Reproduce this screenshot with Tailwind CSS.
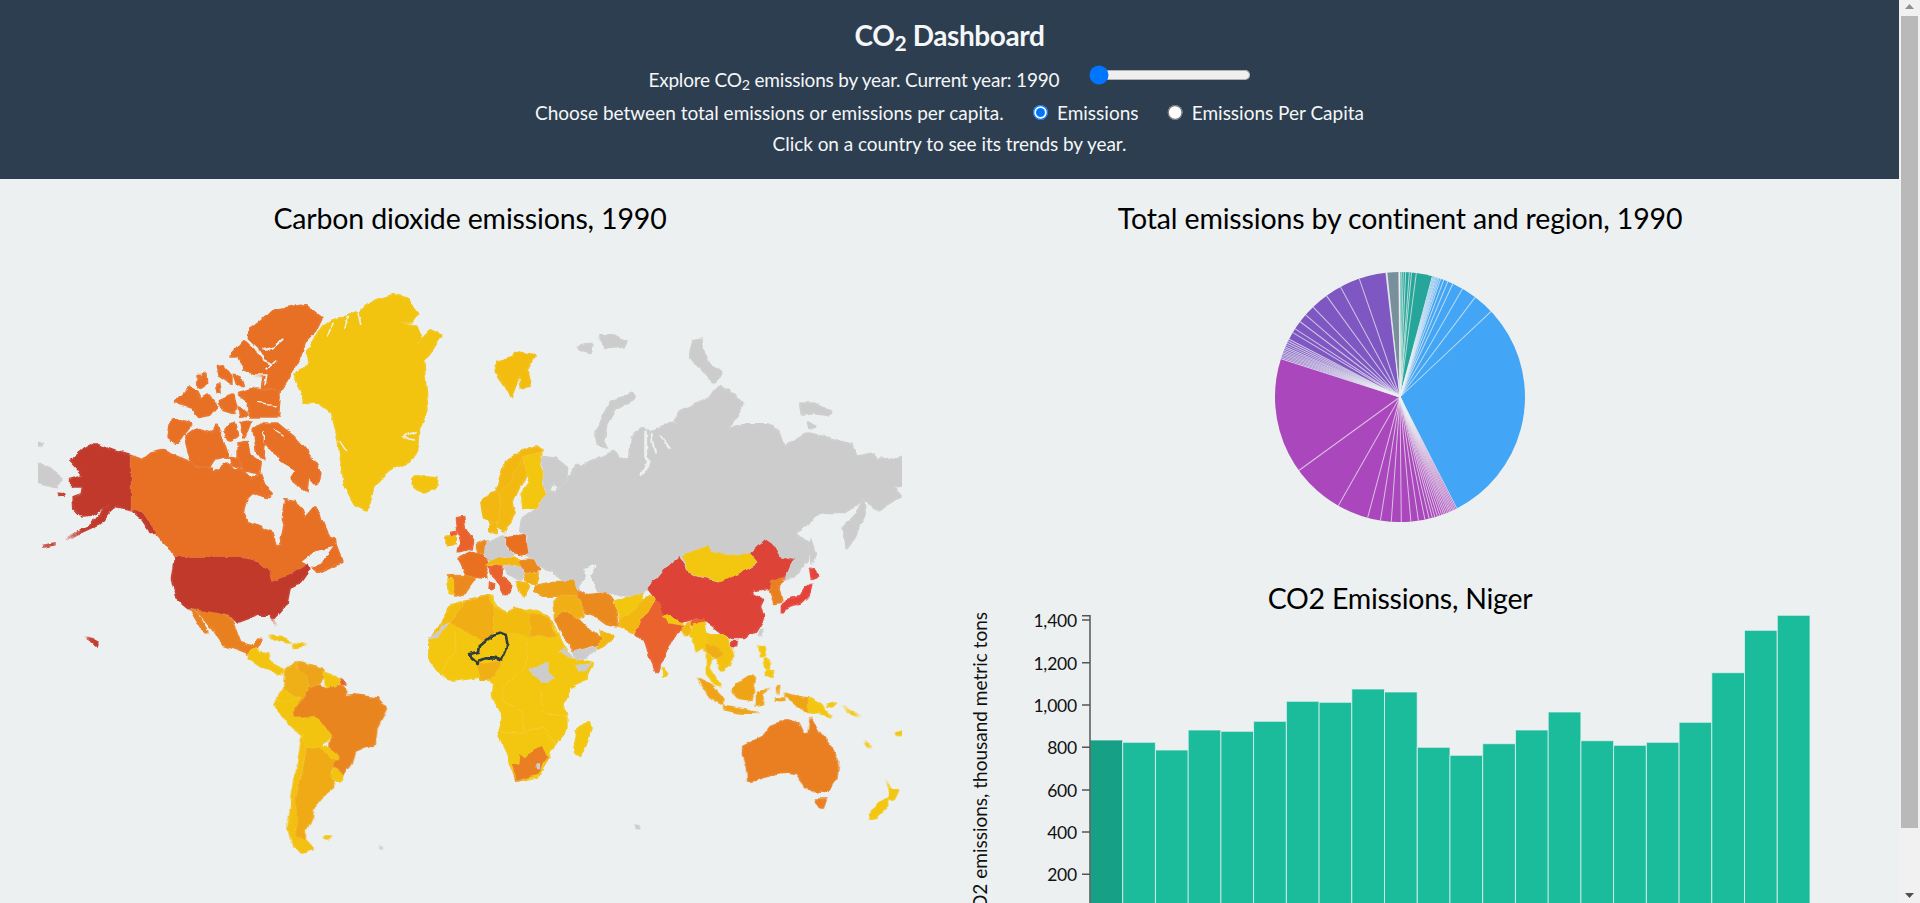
<!doctype html>
<html lang="en">
<head>
<meta charset="utf-8">
<title>CO2 Dashboard</title>
<script src="https://cdn.jsdelivr.net/npm/@tailwindcss/browser@4"></script>
</head>
<body class="m-0 h-[903px] overflow-hidden bg-[#ecf0f1] [font-family:Lato,'Noto_Sans',sans-serif] text-black">
<div class="flex h-[903px] w-[1920px]">
<main class="w-[1899px] h-[903px] overflow-hidden">
  <header class="h-[179px] bg-[#2c3e50] text-[#f4f6f7] flex flex-col items-center pt-[17px]">
    <h1 class="h-[36px] text-[28px] leading-[36px] font-bold tracking-[-0.4px]">CO<sub>2</sub> Dashboard</h1>
    <div class="mt-[9px] h-[36px] flex items-center text-[19px] tracking-[-0.2px]">
      <span>Explore CO<sub>2</sub> emissions by year. Current year: 1990</span>
      <input type="range" min="1990" max="2011" value="1990" class="ml-[24px] w-[129px] [zoom:1.25] -mt-[8px]">
    </div>
    <div class="-mt-[1px] h-[32px] flex items-center text-[19px]">
      <span>Choose between total emissions or emissions per capita.</span>
      <label class="ml-[29px] flex items-center gap-[8px]"><input type="radio" name="m" checked class="[zoom:1.25] m-0"><span>Emissions</span></label>
      <label class="ml-[29px] flex items-center gap-[8px]"><input type="radio" name="m" class="[zoom:1.25] m-0"><span>Emissions Per Capita</span></label>
    </div>
    <p class="h-[30px] leading-[30px] text-[19px] tracking-[-0.05px]">Click on a country to see its trends by year.</p>
  </header>
  <div class="flex h-[724px]">
    <section class="w-[940px] shrink-0">
      <h2 class="h-[61px] pt-[21px] text-center text-[28.5px] leading-[36px] tracking-[-0.15px]">Carbon dioxide emissions, 1990</h2>
      <svg class="block" width="940" height="663" viewBox="0 240 940 663">
        <defs>
          <clipPath id="mapclip"><rect x="38" y="240" width="864" height="663"/></clipPath>
          <filter id="rough" filterUnits="userSpaceOnUse" x="0" y="240" width="940" height="663" color-interpolation-filters="sRGB">
            <feMorphology in="SourceGraphic" operator="dilate" radius="1" result="fat"/>
            <feMerge result="c"><feMergeNode in="fat"/><feMergeNode in="SourceGraphic"/></feMerge>
            <feTurbulence type="fractalNoise" baseFrequency=".09" numOctaves="3" seed="4" result="n"/>
            <feDisplacementMap in="c" in2="n" scale="5" xChannelSelector="R" yChannelSelector="G" result="d"/>
            <feGaussianBlur in="d" stdDeviation=".4"/>
          </filter>
        </defs>
        <g clip-path="url(#mapclip)">
        <g filter="url(#rough)" stroke="#ffffff" stroke-opacity=".16" stroke-width="1.2">
        <!-- North America / Greenland -->
        <g transform="translate(0 260) scale(.33333)">
          <polygon fill="#cccccc" points="100,600 150,630 185,655 165,682 100,665"/>
          <polygon fill="#cccccc" points="100,545 130,550 120,557 100,557"/>
          <polygon fill="#c0392b" points="393,588 340,573 285,552 250,572 212,603 232,625 250,648 205,660 225,680 248,680 245,705 220,715 222,745 245,770 275,768 300,750 325,735 285,785 195,842 235,820 300,790 325,755 345,738 393,748 430,760 470,820 455,820 425,775 393,748"/>
          <polygon fill="#c0392b" points="128,858 165,850 165,853 130,860"/>
          <polygon fill="#c0392b" points="172,697 192,702 190,706 174,701"/>
          <polygon fill="#c0392b" points="258,1132 272,1136 294,1148 290,1155 280,1145"/>
          <polygon fill="#e87024" points="393,588 430,600 455,580 490,572 530,590 575,608 590,625 635,625 640,640 680,610 700,630 725,630 755,660 780,640 790,665 785,695 815,705 800,715 760,695 740,715 728,760 745,785 780,800 815,820 828,860 845,855 855,800 848,775 855,720 880,725 905,750 915,775 945,740 960,770 985,830 1005,835 1008,860 1025,905 985,925 950,940 925,910 870,945 815,965 805,930 770,900 725,890 525,890 505,860 470,820 430,760 393,748"/>
          <polygon fill="#ecf0f1" stroke="none" points="905,905 950,870 1000,858 962,912 935,920"/>
          <polygon fill="#e87024" points="760,510 790,490 830,490 880,530 915,570 965,640 945,672 925,650 920,695 880,660 850,640 840,590 820,575 795,545 790,600 770,570"/>
          <polygon fill="#e87024" points="555,530 590,505 640,520 650,495 670,545 685,590 640,600 625,625 580,615 565,575"/>
          <polygon fill="#e87024" points="515,475 575,490 550,520 530,550 505,530"/>
          <polygon fill="#e87024" points="672,510 700,488 712,525 690,540"/>
          <polygon fill="#e87024" points="720,488 755,483 745,510 730,535 725,505"/>
          <polygon fill="#e87024" points="715,550 740,545 750,590 780,610 775,640 730,630 715,590"/>
          <polygon fill="#e87024" points="690,590 720,595 720,625 695,615"/>
          <polygon fill="#e87024" points="715,402 750,392 770,385 840,395 835,470 750,470 745,425"/>
          <polygon fill="#e87024" points="690,290 745,230 755,205 790,180 820,150 850,145 880,140 915,135 965,175 945,215 915,245 900,290 880,330 855,370 840,392 785,385 790,350 760,345 735,330 715,290"/>
          <polygon fill="#e87024" points="650,320 670,318 695,350 695,372 655,345"/>
          <polygon fill="#e87024" points="700,340 720,350 730,380 710,370"/>
          <polygon fill="#e87024" points="527,425 570,380 590,400 600,420 625,405 650,440 630,465 595,472 570,440 540,432"/>
          <polygon fill="#e87024" points="655,425 700,405 710,440 700,460 670,450"/>
          <polygon fill="#e87024" points="590,365 620,340 622,370 600,385"/>
          <polygon fill="#e87024" points="645,375 655,372 660,395 650,395"/>
          <polygon fill="#e87024" points="715,438 745,465 720,468"/>
          <polygon fill="#e87024" points="590,350 602,345 600,355"/>
          <g fill="none" stroke="#ecf0f1" stroke-opacity="1" stroke-linecap="round">
            <polyline stroke-width="7" points="735,232 770,265 790,300 815,312"/>
            <polyline stroke-width="6" points="790,270 820,262 848,238"/>
            <polyline stroke-width="5" points="800,328 830,300"/>
            <polyline stroke-width="5" points="765,345 800,345 795,375"/>
            <polyline stroke-width="4" points="770,430 830,438"/>
            <polyline stroke-width="4" points="790,515 790,545"/>
            <polyline stroke-width="4" points="825,510 850,525"/>
            <polyline stroke-width="5" points="1075,150 1085,190"/>
            <polyline stroke-width="5" points="1045,170 1035,205"/>
            <polyline stroke-width="4" points="1000,190 980,225"/>
            <polyline stroke-width="5" points="1245,515 1210,530 1240,540"/>
            <polyline stroke-width="4" points="1020,545 1040,575"/>
          </g>
          <polygon fill="#ecf0f1" stroke="none" points="825,590 850,610 885,630 860,670 830,650"/>
          <polygon fill="#e87024" points="782,665 820,700 800,710 785,695"/>
          <polygon fill="#f2c40f" points="1180,105 1220,115 1255,160 1235,185 1195,185 1250,200 1265,240 1250,255 1295,210 1325,225 1295,270 1270,300 1275,360 1283,450 1255,510 1252,570 1230,605 1175,625 1135,660 1115,690 1100,752 1065,735 1035,680 1020,580 1015,540 995,455 960,430 915,425 885,350 930,310 920,280 965,205 1000,180 1075,155 1130,120"/>
          <g fill="none" stroke="#ecf0f1" stroke-opacity="1" stroke-linecap="round">
            <polyline stroke-width="5" points="1075,150 1085,190"/>
            <polyline stroke-width="5" points="1045,170 1035,205"/>
            <polyline stroke-width="4" points="1000,190 980,225"/>
            <polyline stroke-width="5" points="1245,515 1210,530 1240,540"/>
            <polyline stroke-width="4" points="1020,545 1040,575"/>
          </g>
          <polygon fill="#f2c40f" points="1235,660 1250,648 1310,655 1305,685 1270,698 1245,680"/>
          <polygon fill="#e8801f" points="570,1045 590,1060 625,1120 605,1105"/>
          <polygon fill="#e8801f" points="590,1048 630,1052 655,1058 685,1072 700,1085 710,1110 725,1150 760,1160 775,1135 785,1137 775,1160 750,1170 745,1182 715,1170 670,1155 640,1110 615,1080"/>
          <polygon fill="#c0392b" points="525,890 725,890 770,900 805,930 815,965 870,945 925,910 925,930 900,965 870,980 860,1030 820,1075 830,1105 815,1065 770,1065 715,1085 700,1070 655,1060 630,1055 565,1045 535,1020 515,960"/>
        </g>
        <!-- Central and South America -->
        <g transform="translate(180 620) scale(.33333)">
          <polygon fill="#f2c40f" points="205,100 230,80 235,100 265,100 270,130 310,150 300,165 275,150 250,140 210,115"/>
          <polygon fill="#f2c40f" points="265,45 300,50 335,70 300,62"/>
          <polygon fill="#f2c40f" points="340,70 380,75 345,82"/>
          <polygon fill="#efb016" points="350,128 315,150 312,205 345,232 368,232 385,200 380,170 352,150"/>
          <polygon fill="#eea41a" points="352,128 395,140 430,150 430,170 410,195 390,205 380,170 355,150"/>
          <polygon fill="#f2c40f" points="430,155 475,180 480,195 440,205"/>
          <polygon fill="#e8622a" points="478,175 498,190 485,195"/>
          <polygon fill="#f2c40f" points="312,205 345,232 320,250 290,238"/>
          <polygon fill="#f2c40f" points="290,240 320,250 345,232 365,235 340,270 345,290 375,290 370,345 340,325 310,290 285,255"/>
          <polygon fill="#e9851f" points="368,232 385,207 410,195 440,205 480,195 500,210 495,228 520,225 590,235 618,265 600,300 590,320 585,370 525,395 515,430 490,462 460,440 480,405 450,385 455,345 430,315 400,290 375,290 345,290 340,268"/>
          <polygon fill="#f2c40f" points="375,290 400,290 430,315 455,345 420,380 380,385 368,345"/>
          <polygon fill="#f2c40f" points="420,380 450,385 480,405 475,420 450,420"/>
          <polygon fill="#f2c40f" points="460,442 490,462 480,482 450,475"/>
          <polygon fill="#f3bf10" points="368,345 380,385 355,500 345,545 355,600 345,650 375,660 400,688 365,695 340,680 325,625 335,545"/>
          <polygon fill="#efaa16" points="380,385 420,378 450,420 475,420 450,445 460,500 430,525 415,545 400,565 395,600 375,630 375,660 345,650 355,600 345,545 370,450"/>
          <polygon fill="#f2c40f" points="432,650 452,648 445,657"/>
          <polygon fill="#cccccc" points="598,678 610,688 604,690"/>
        </g>
        <!-- Russia, China, north Asia -->
        <g transform="translate(480 260) scale(.33333)">
          <polygon fill="#cccccc" points="185,590 225,595 262,625 260,655 240,690 222,665 205,690 230,695 270,650 290,610 300,625 330,605 400,575 420,600 450,590 455,530 490,505 510,520 550,495 590,490 595,460 660,425 690,415 715,380 755,395 785,430 775,465 735,510 760,500 790,495 860,495 895,510 915,560 985,520 1050,535 1115,555 1130,590 1180,580 1190,600 1290,590 1290,675 1240,680 1260,710 1190,750 1150,715 1090,760 1020,760 945,820 985,850 985,900 940,950 915,955 875,965 700,1050 505,985 470,1015 410,1000 355,1000 345,965 315,950 290,990 255,965 220,935 180,920 170,900 140,885 142,830 120,810 125,780 175,745 195,700"/>
          <g fill="none" stroke="#ecf0f1" stroke-opacity="1" stroke-linecap="round">
            <polyline stroke-width="9" points="497,520 497,590 510,605 485,640"/>
            <polyline stroke-width="6" points="512,525 525,575"/>
            <polyline stroke-width="5" points="540,525 570,565"/>
          </g>
          <polygon fill="#ecf0f1" stroke="none" points="310,925 350,910 330,945 355,1000 330,985"/>
          <polygon fill="#cccccc" points="345,530 370,470 395,425 460,400 465,415 405,445 380,490 370,545 380,565 350,550"/>
          <polygon fill="#cccccc" points="295,262 335,250 330,280"/>
          <polygon fill="#cccccc" points="360,225 395,225 420,240 440,240 430,260 380,265"/>
          <polygon fill="#cccccc" points="630,285 640,240 665,235 670,280 690,315 725,340 700,365 660,325"/>
          <polygon fill="#cccccc" points="960,430 1000,430 1055,455 1040,465 1000,460 965,465"/>
          <polygon fill="#cccccc" points="980,485 1005,500 985,505"/>
          <polygon fill="#cccccc" points="1150,715 1155,760 1125,830 1100,865 1090,800 1130,760"/>
          <polygon fill="#cccccc" points="990,835 1005,880 995,915 990,880"/>
          <polygon fill="#dd4337" points="505,985 550,930 598,890 625,935 655,950 720,965 790,935 835,910 810,880 855,838 880,855 900,890 938,900 915,955 875,965 865,985 825,990 815,1000 850,1020 840,1040 850,1075 825,1115 790,1135 760,1135 725,1120 680,1085 650,1075 600,1085 545,1065 535,1030 520,1005"/>
          <polygon fill="#f3c60f" points="605,885 680,858 695,875 740,885 810,880 835,908 790,935 725,965 660,950 625,935"/>
          <polygon fill="#e9801f" points="870,965 915,950 895,985 905,1025 885,1030 870,990"/>
          <polygon fill="#e5433a" points="990,925 1018,945 995,955"/>
          <polygon fill="#e5433a" points="995,970 985,1010 965,1030 925,1040 905,1060 905,1040 920,1020 960,1010 975,985"/>
          <polygon fill="#f2b811" points="6,725 50,690 75,605 130,570 175,558 190,570 130,590 95,660 60,700 58,780 45,790 15,775"/>
          <polygon fill="#f2ba10" points="60,700 95,660 130,590 140,640 120,675 95,730 105,760 75,815 50,800 58,780"/>
          <polygon fill="#f3c60f" points="130,590 185,575 180,620 195,705 170,745 130,745 125,700 150,665 140,640"/>
          <polygon fill="#f2b811" points="30,790 45,785 48,820 30,815"/>
          <polygon fill="#f3bd10" points="48,305 100,290 105,275 165,285 140,330 150,380 125,385 120,345 95,410 75,375 50,340"/>
        </g>
        <!-- Africa -->
        <g transform="translate(400 600) scale(.33333)">
          <polygon fill="#f3c60f" points="95,115 135,50 155,15 195,5 265,-12 280,-10 285,20 320,40 350,42 390,30 445,50 490,140 515,175 580,190 555,240 510,265 490,315 500,350 500,385 465,430 440,480 410,530 350,542 330,490 315,445 295,395 310,345 275,285 280,250 240,230 160,242 120,220 90,180 90,115"/>
          <polyline fill="none" stroke-opacity=".3" stroke-width="1.5" points="165,95 165,160 140,180 130,220"/>
          <polyline fill="none" stroke-opacity=".3" stroke-width="1.5" points="380,125 380,200 310,260 310,300 365,335 370,395"/>
          <polyline fill="none" stroke-opacity=".3" stroke-width="1.5" points="420,270 430,340 500,350"/>
          <polyline fill="none" stroke-opacity=".3" stroke-width="1.5" points="300,395 370,400 430,380 465,430"/>
          <polyline fill="none" stroke-opacity=".3" stroke-width="1.5" points="470,110 380,110"/>
          <polygon fill="#f2bd10" points="95,115 135,50 155,15 195,5 150,72 125,75 105,120"/>
          <polygon fill="#cccccc" points="90,118 120,90 125,72 150,72 130,85 115,118"/>
          <polygon fill="#f0ae14" points="195,5 265,-12 280,20 280,98 250,125 205,100 150,72"/>
          <polygon fill="#f2bb10" points="280,20 320,40 350,25 390,40 390,120 355,100 320,100 280,98"/>
          <polygon fill="#f0ae14" points="390,40 445,50 470,110 390,110"/>
          <polygon fill="#f0b015" points="245,240 230,200 235,190 305,178 300,200 270,240"/>
          <polygon fill="#f2c50f" stroke="#2c3e3e" stroke-opacity="1" stroke-width="8" stroke-linejoin="round" points="210,165 237,158 240,135 275,105 300,98 318,105 322,130 318,150 305,178 280,172 255,172 235,180 233,192 215,178"/>
          <polygon fill="#e97f22" points="335,492 355,490 358,462 375,475 400,450 430,440 445,470 430,490 410,525 350,542"/>
          <polygon fill="#cccccc" points="405,490 420,490 420,505 408,505"/>
          <polygon fill="#f3c60f" points="567,365 572,385 555,440 540,465 525,460 522,430 530,395"/>
          <polygon fill="#cccccc" points="385,205 410,205 430,195 440,185 445,215 465,235 440,248 420,245 400,225"/>
          <polygon fill="#cccccc" points="475,160 490,145 520,178 495,165"/>
          <polygon fill="#cccccc" points="525,195 575,190 560,215 540,212"/>
          <polygon fill="#cccccc" points="520,155 590,138 585,155 525,182"/>
          <polygon fill="#f2b811" points="610,118 600,90 640,110 610,140 590,150 590,135"/>
          <polygon fill="#ea8a1e" points="465,55 490,35 520,45 555,80 590,105 610,118 590,135 520,155 510,130 480,90"/>
          <polygon fill="#cccccc" points="704,678 716,684 708,689"/>
        </g>
        <!-- Europe, Middle East, South Asia -->
        <g transform="translate(430 470) scale(.33333)">
          <polygon fill="#cccccc" points="165,220 220,195 225,225 250,255 215,265 180,280 165,260"/>
          <polygon fill="#e9701f" points="225,200 285,195 292,250 265,255 225,225"/>
          <polygon fill="#cccccc" points="222,285 265,290 288,315 270,330 235,310"/>
          <polygon fill="#e9622d" points="80,145 100,140 105,175 130,215 125,235 85,245 95,215 85,190"/>
          <polygon fill="#f2b811" points="48,200 75,195 75,220 50,230"/>
          <polygon fill="#e9622d" points="60,188 78,185 78,196 60,196"/>
          <polygon fill="#ea8a1e" points="140,225 170,210 165,250 145,245"/>
          <polygon fill="#e8701f" points="88,265 125,245 160,255 175,275 165,300 170,325 135,320 110,315"/>
          <polygon fill="#ea8a1e" points="55,318 110,317 135,325 100,375 75,380 70,330"/>
          <polygon fill="#f2c40f" points="55,325 72,330 72,375 55,372"/>
          <polygon fill="#f2b811" points="165,285 210,262 270,268 275,290 225,285"/>
          <polygon fill="#e9622d" points="175,290 215,285 215,320 245,350 225,375 200,325 185,310"/>
          <polygon fill="#e9622d" points="180,335 190,340 188,360 178,355"/>
          <polygon fill="#ea8a1e" points="270,270 315,268 328,300 285,312 272,290"/>
          <polygon fill="#f0ae14" points="285,312 325,310 315,340 290,335"/>
          <polygon fill="#f2b811" points="262,335 285,340 295,350 280,378 270,365 262,345"/>
          <polygon fill="#ee9f1a" points="315,345 360,335 430,335 445,372 400,378 340,378 315,365"/>
          <polygon fill="#f0b015" points="370,400 390,378 440,375 465,440 440,445 405,420 375,445"/>
          <polygon fill="#ea8a1e" points="440,358 470,375 530,370 550,395 565,470 530,462 500,440 470,430 445,380"/>
          <polygon fill="#f3c60f" points="555,395 600,380 635,368 635,395 615,420 570,445"/>
          <polygon fill="#f2b811" points="570,445 615,420 635,395 660,380 675,385 650,430 625,445 630,470 610,490 570,470"/>
          <polygon fill="#ea622e" points="655,395 690,395 700,435 755,465 760,480 735,490 710,540 680,605 660,560 645,510 620,500 615,490 630,470 628,445 650,430 670,395"/>
          <polygon fill="#f3c60f" points="695,595 710,615 697,622"/>
        </g>
        <!-- South-East Asia and Oceania -->
        <g transform="translate(640 590) scale(.33333)">
          <polygon fill="#f3c60f" points="65,82 80,75 125,100 125,107 90,100"/>
          <polygon fill="#f2b811" points="125,112 150,95 155,125 135,140"/>
          <polygon fill="#ea622e" points="155,100 170,85 190,85 192,112 175,112"/>
          <polygon fill="#f3c60f" points="165,100 190,95 195,130 205,150 200,185 190,170 170,185 160,145 150,140"/>
          <polygon fill="#f3c10f" points="195,135 245,135 265,150 280,200 270,225 245,240 225,190 215,195 200,175"/>
          <polygon fill="#efae14" points="195,160 240,170 250,195 225,205 205,185"/>
          <polygon fill="#f3c60f" points="200,190 215,205 205,235 240,290 225,285 200,245"/>
          <polygon fill="#dd4337" points="275,155 288,155 285,170 276,168"/>
          <polygon fill="#cccccc" points="358,120 368,118 362,140 355,135"/>
          <polygon fill="#f3c60f" points="355,170 370,170 375,195 360,200"/>
          <polygon fill="#f3c60f" points="370,205 390,215 390,235 375,230"/>
          <polygon fill="#f3c60f" points="380,240 400,240 395,262 380,255"/>
          <polygon fill="#efa418" points="175,265 210,285 250,325 250,345 225,335 190,295"/>
          <polygon fill="#efa418" points="252,350 310,360 355,370 300,368 252,358"/>
          <polygon fill="#efa418" points="335,255 345,265 335,330 300,325 275,300 295,280"/>
          <polygon fill="#efa418" points="350,310 390,295 365,310 370,340 350,345"/>
          <polygon fill="#efa418" points="405,325 435,325 432,330 405,332"/>
          <polygon fill="#efa418" points="410,290 418,290 414,312"/>
          <polygon fill="#efa418" points="435,310 470,320 505,325 505,370 480,350 450,325"/>
          <polygon fill="#f3c60f" points="505,325 535,340 575,380 540,368 520,372 505,370"/>
          <polygon fill="#f3c60f" points="560,345 590,335 575,350"/>
          <polygon fill="#f3c60f" points="605,345 660,380 640,372"/>
          <polygon fill="#f3c60f" points="672,455 695,470 680,465"/>
          <polygon fill="#f3c60f" points="770,430 785,425 778,437"/>
          <polygon fill="#e97f21" points="310,470 370,440 395,408 440,390 475,400 490,430 505,432 512,385 535,425 570,470 595,515 590,560 560,600 530,608 500,590 470,550 445,545 400,550 350,570 325,573 320,530 308,490"/>
          <polygon fill="#e97f21" points="530,628 558,628 548,655 538,650"/>
          <polygon fill="#f3c60f" points="738,572 755,600 775,600 760,630 745,625 750,600"/>
          <polygon fill="#f3c60f" points="742,625 745,645 710,680 690,685 695,665"/>
        </g>
        </g>
        </g>
      </svg>
    </section>
    <section class="w-[920px] shrink-0 flex flex-col items-center">
      <h2 class="h-[61px] pt-[21px] text-center text-[28.5px] leading-[36px] tracking-[-0.15px]">Total emissions by continent and region, 1990</h2>
      <svg class="block mt-[27px]" width="260" height="260" viewBox="-130 -130 260 260">
        <g fill="none" stroke-width="125">
          <circle r="62.5" pathLength="360" stroke="#26a69a" stroke-dasharray="15 345" transform="rotate(-90)"/>
          <circle r="62.5" pathLength="360" stroke="#42a5f5" stroke-dasharray="138 222" transform="rotate(-75)"/>
          <circle r="62.5" pathLength="360" stroke="#ab47bc" stroke-dasharray="134.8 225.2" transform="rotate(63)"/>
          <circle r="62.5" pathLength="360" stroke="#7e57c2" stroke-dasharray="65.7 294.3" transform="rotate(197.8)"/>
          <circle r="62.5" pathLength="360" stroke="#78909c" stroke-dasharray="5.5 354.5" transform="rotate(264)"/>
        </g>
        <g stroke="#ecf0f1" stroke-width="1" stroke-opacity=".72">
          <path d="M0 0V-125" transform="rotate(0)"/><path d="M0 0V-125" transform="rotate(.6)"/><path d="M0 0V-125" transform="rotate(1.5)"/><path d="M0 0V-125" transform="rotate(2.6)"/><path d="M0 0V-125" transform="rotate(4.3)"/><path d="M0 0V-125" transform="rotate(5.3)"/><path d="M0 0V-125" transform="rotate(7.5)"/>
          <path d="M0 0V-125" transform="rotate(15)"/><path d="M0 0V-125" transform="rotate(15.5)"/><path d="M0 0V-125" transform="rotate(16)"/><path d="M0 0V-125" transform="rotate(16.5)"/><path d="M0 0V-125" transform="rotate(17)"/><path d="M0 0V-125" transform="rotate(17.6)"/><path d="M0 0V-125" transform="rotate(18.2)"/><path d="M0 0V-125" transform="rotate(19)"/><path d="M0 0V-125" transform="rotate(20.5)"/><path d="M0 0V-125" transform="rotate(22.5)"/><path d="M0 0V-125" transform="rotate(25)"/><path d="M0 0V-125" transform="rotate(30)"/><path d="M0 0V-125" transform="rotate(37)"/><path d="M0 0V-125" transform="rotate(46.8)"/>
          <path d="M0 0V-125" transform="rotate(153)"/><path d="M0 0V-125" transform="rotate(153.7)"/><path d="M0 0V-125" transform="rotate(154.4)"/><path d="M0 0V-125" transform="rotate(155.1)"/><path d="M0 0V-125" transform="rotate(155.8)"/><path d="M0 0V-125" transform="rotate(156.5)"/><path d="M0 0V-125" transform="rotate(157.2)"/><path d="M0 0V-125" transform="rotate(158)"/><path d="M0 0V-125" transform="rotate(158.8)"/><path d="M0 0V-125" transform="rotate(159.6)"/><path d="M0 0V-125" transform="rotate(160.5)"/><path d="M0 0V-125" transform="rotate(161.5)"/><path d="M0 0V-125" transform="rotate(162.6)"/><path d="M0 0V-125" transform="rotate(163.8)"/><path d="M0 0V-125" transform="rotate(165)"/><path d="M0 0V-125" transform="rotate(166.5)"/><path d="M0 0V-125" transform="rotate(168.5)"/><path d="M0 0V-125" transform="rotate(171.5)"/><path d="M0 0V-125" transform="rotate(175)"/><path d="M0 0V-125" transform="rotate(179.4)"/><path d="M0 0V-125" transform="rotate(184)"/><path d="M0 0V-125" transform="rotate(189)"/><path d="M0 0V-125" transform="rotate(195)"/><path d="M0 0V-125" transform="rotate(209.6)"/><path d="M0 0V-125" transform="rotate(234)"/>
          <path d="M0 0V-125" transform="rotate(287.8)"/><path d="M0 0V-125" transform="rotate(288.5)"/><path d="M0 0V-125" transform="rotate(289.2)"/><path d="M0 0V-125" transform="rotate(289.9)"/><path d="M0 0V-125" transform="rotate(290.6)"/><path d="M0 0V-125" transform="rotate(291.3)"/><path d="M0 0V-125" transform="rotate(292)"/><path d="M0 0V-125" transform="rotate(292.8)"/><path d="M0 0V-125" transform="rotate(293.6)"/><path d="M0 0V-125" transform="rotate(294.5)"/><path d="M0 0V-125" transform="rotate(295.5)"/><path d="M0 0V-125" transform="rotate(296.5)"/><path d="M0 0V-125" transform="rotate(297.5)"/><path d="M0 0V-125" transform="rotate(301)"/><path d="M0 0V-125" transform="rotate(303)"/><path d="M0 0V-125" transform="rotate(307)"/><path d="M0 0V-125" transform="rotate(311)"/><path d="M0 0V-125" transform="rotate(316)"/><path d="M0 0V-125" transform="rotate(324)"/><path d="M0 0V-125" transform="rotate(331.6)"/><path d="M0 0V-125" transform="rotate(341)"/><path d="M0 0V-125" transform="rotate(353.5)"/><path d="M0 0V-125" transform="rotate(354)"/>
          <path d="M0 0V-125" transform="rotate(359.5)"/>
        </g>
      </svg>
      <h2 class="mt-[53px] h-[32px] pt-[2px] text-center text-[28.5px] leading-[32px] tracking-[-0.25px]">CO2 Emissions, Niger</h2>
      <svg class="block" width="920" height="291" viewBox="940 612 920 291">
        <g fill="#1abc9c" stroke="#ecf0f1" stroke-opacity=".75" stroke-width="1">
          <rect x="1090" y="740" width="32.7" height="176" fill="#16a085"/>
          <rect x="1122.7" y="742.3" width="32.7" height="174"/>
          <rect x="1155.5" y="750" width="32.7" height="166"/>
          <rect x="1188.2" y="730" width="32.7" height="186"/>
          <rect x="1220.9" y="731.3" width="32.7" height="185"/>
          <rect x="1253.6" y="721.3" width="32.7" height="195"/>
          <rect x="1286.4" y="701.3" width="32.7" height="215"/>
          <rect x="1319.1" y="702.3" width="32.7" height="214"/>
          <rect x="1351.8" y="689" width="32.7" height="227"/>
          <rect x="1384.5" y="692" width="32.7" height="224"/>
          <rect x="1417.3" y="747.3" width="32.7" height="169"/>
          <rect x="1450" y="755.3" width="32.7" height="161"/>
          <rect x="1482.7" y="743.7" width="32.7" height="172"/>
          <rect x="1515.5" y="730" width="32.7" height="186"/>
          <rect x="1548.2" y="712" width="32.7" height="204"/>
          <rect x="1580.9" y="740.7" width="32.7" height="175"/>
          <rect x="1613.6" y="745.3" width="32.7" height="171"/>
          <rect x="1646.4" y="742.3" width="32.7" height="174"/>
          <rect x="1679.1" y="722.3" width="32.7" height="194"/>
          <rect x="1711.8" y="672.7" width="32.7" height="243"/>
          <rect x="1744.5" y="630.3" width="32.7" height="286"/>
          <rect x="1777.3" y="615.3" width="32.7" height="301"/>
        </g>
        <g fill="none" stroke="#555555" stroke-width="1.5">
          <path d="M1082 615.7H1090V916"/>
          <path d="M1082 620H1090M1082 662.7H1090M1082 705H1090M1082 747.3H1090M1082 790H1090M1082 832H1090M1082 874.3H1090"/>
        </g>
        <g fill="#111111" font-size="17.5" text-anchor="end" letter-spacing="-.2">
          <text x="1077" y="627">1,400</text>
          <text x="1077" y="670">1,200</text>
          <text x="1077" y="712">1,000</text>
          <text x="1077" y="754">800</text>
          <text x="1077" y="797">600</text>
          <text x="1077" y="839">400</text>
          <text x="1077" y="881">200</text>
        </g>
        <text transform="translate(987 612) rotate(-90)" text-anchor="end" fill="#111111" font-size="19">CO2 emissions, thousand metric tons</text>
      </svg>
    </section>
  </div>
</main>
<aside class="w-[21px] h-[903px] bg-[#f1f1f1] flex flex-col items-center shrink-0">
  <svg class="block shrink-0" width="21" height="16" viewBox="0 0 21 16"><polygon points="10.5,4 15,9 6,9" fill="#8f8f8f"/></svg>
  <div class="w-[17px] h-[812px] bg-[#b9b9b9]"></div>
  <div class="flex-1"></div>
  <svg class="block shrink-0" width="21" height="16" viewBox="0 0 21 16"><polygon points="6,6 15,6 10.5,11" fill="#505050"/></svg>
</aside>
</div>
</body>
</html>
